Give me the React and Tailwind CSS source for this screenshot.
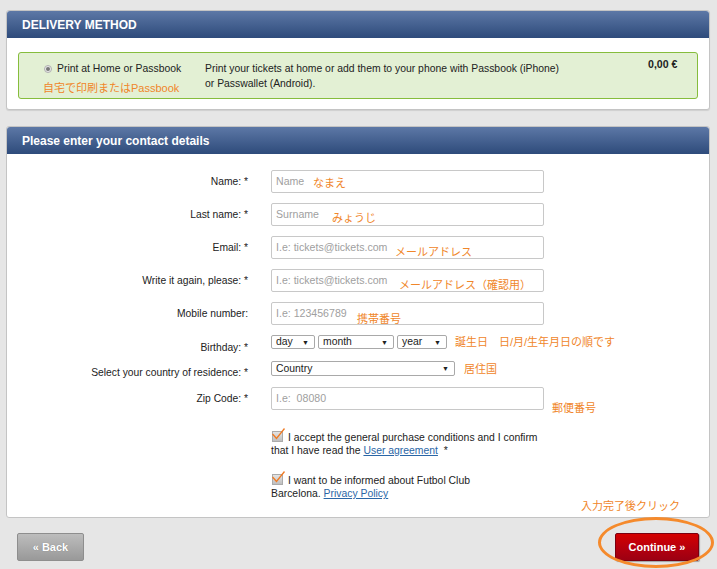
import React from 'react';

const orange = 'text-[#f0862a]';

function Radio() {
  return (
    <span className="inline-flex items-center justify-center w-[8px] h-[8px] rounded-full border border-[#b0b0b0] bg-[#e8e8e8] mr-[5px] shrink-0">
      <span className="w-[4px] h-[4px] rounded-full bg-[#777]" />
    </span>
  );
}

function CheckMark() {
  return (
    <svg width="15" height="14" viewBox="0 0 15 14" className="float-left mr-[2px] mt-[-3px]">
      <defs>
        <linearGradient id="cb" x1="0" y1="0" x2="0" y2="1">
          <stop offset="0" stopColor="#e6e6e6" />
          <stop offset="1" stopColor="#bdbdbd" />
        </linearGradient>
      </defs>
      <rect x="1.5" y="3.5" width="10" height="10" fill="url(#cb)" stroke="#ababab" />
      <path d="M1.5 6 L5.5 10.5 L13.5 0.5" fill="none" stroke="#f07a22" strokeWidth="1.3" />
    </svg>
  );
}

function TextField({ placeholder, note, noteX, noteY }) {
  return (
    <div className="relative w-[273px] h-[23px] border border-[#c8c8c8] rounded-[2px] bg-white flex items-center pl-[4px] text-[10.6px] text-[#a0a0a0] whitespace-pre">
      {placeholder}
      {note && (
        <span
          className={`absolute text-[11px] leading-[12px] whitespace-nowrap ${orange} ${noteX} ${noteY}`}
        >
          {note}
        </span>
      )}
    </div>
  );
}

function Select({ label, w, h = 'h-[14px]' }) {
  return (
    <div className={`${w} ${h} border border-[#a9a9a9] rounded-[2px] bg-white flex items-center justify-between pl-[4px] pr-[5px] text-[10.4px] text-[#222]`}>
      <span>{label}</span>
      <span className="text-[7px] leading-none">▼</span>
    </div>
  );
}

function Row({ label, children, className = 'items-center', labelClass = '' }) {
  return (
    <div className={`flex ${className}`}>
      <div className={`w-[241px] text-right text-[10.3px] leading-[13px] text-[#222] ${labelClass}`}>{label}</div>
      <div className="ml-[23px] flex items-center">{children}</div>
    </div>
  );
}

function PanelHeader({ title }) {
  return (
    <div className="h-[27px] bg-gradient-to-b from-[#5d78a6] to-[#2e4b7b] rounded-t-[3px] flex items-center px-[15px] text-white font-bold text-[12px]">
      {title}
    </div>
  );
}

export default function App() {
  return (
    <div className="w-[717px] h-[569px] overflow-hidden bg-[#e6e6e6] pt-[10px] pl-[6px] pr-[7px] font-[family-name:Liberation_Sans,Noto_Sans_CJK_JP,sans-serif] text-[#222]">
      {/* Delivery method */}
      <div className="bg-white border border-[#c4c4c4] rounded-[3px] shadow-[0_1px_1px_rgba(0,0,0,0.1)]">
        <PanelHeader title="DELIVERY METHOD" />
        <div className="px-[11px] pt-[14px] pb-[10px]">
          <div className="h-[47px] bg-[#e3f0d4] border border-[#86bd3c] rounded-[3px] flex pl-[25px] pt-[8px]">
            <div className="w-[161px] flex flex-col">
              <div className="flex items-center text-[10.4px] h-[15px]">
                <Radio />
                Print at Home or Passbook
              </div>
              <div className={`text-[11px] leading-[12px] mt-[6px] ml-[-1px] ${orange}`}>自宅で印刷またはPassbook</div>
            </div>
            <div className="w-[362px] text-[10.4px] leading-[15px]">
              Print your tickets at home or add them to your phone with Passbook (iPhone) or Passwallet (Android).
            </div>
            <div className="ml-[81px] text-[10.6px] font-bold leading-[12px] mt-[-3px]">0,00 €</div>
          </div>
        </div>
      </div>

      {/* Contact details */}
      <div className="mt-[16px] bg-white border border-[#c4c4c4] rounded-[3px] relative">
        <PanelHeader title="Please enter your contact details" />
        <div className="pt-[16px] pb-[17px] flex flex-col">
          <Row label="Name: *">
            <TextField placeholder="Name" note="なまえ" noteX="left-[41px]" noteY="top-[6px]" />
          </Row>
          <Row label="Last name: *" className="items-center mt-[10px]">
            <TextField placeholder="Surname" note="みょうじ" noteX="left-[60px]" noteY="top-[8px]" />
          </Row>
          <Row label="Email: *" className="items-center mt-[10px]">
            <TextField placeholder="I.e: tickets@tickets.com" note="メールアドレス" noteX="left-[123px]" noteY="top-[9px]" />
          </Row>
          <Row label="Write it again, please: *" className="items-center mt-[10px]">
            <TextField placeholder="I.e: tickets@tickets.com" note="メールアドレス（確認用）" noteX="left-[127px]" noteY="top-[9px]" />
          </Row>
          <Row label="Mobile number:" className="items-center mt-[10px]">
            <TextField placeholder="I.e: 123456789" note="携帯番号" noteX="left-[85px]" noteY="top-[10px]" />
          </Row>
          <Row label="Birthday: *" className="items-start h-[14px] mt-[10px]" labelClass="pt-[6px]">
            <div className="flex items-center gap-[3px] h-[14px]">
              <Select label="day" w="w-[44px]" />
              <Select label="month" w="w-[76px]" />
              <Select label="year" w="w-[50px]" />
              <span className={`ml-[5px] text-[11px] leading-[12px] ${orange}`}>誕生日　日/月/生年月日の順です</span>
            </div>
          </Row>
          <Row label="Select your country of residence: *" className="items-start h-[15px] mt-[12px]" labelClass="pt-[5px]">
            <div className="flex items-center">
              <Select label="Country" w="w-[184px]" h="h-[15px]" />
              <span className={`ml-[9px] text-[11px] leading-[12px] ${orange}`}>居住国</span>
            </div>
          </Row>
          <Row label="Zip Code: *" className="items-center mt-[11px]">
            <div className="flex items-end">
              <TextField placeholder="I.e:  08080" />
              <span className={`ml-[8px] mb-[-4px] text-[11px] leading-[12px] ${orange}`}>郵便番号</span>
            </div>
          </Row>

          <div className="ml-[264px] mt-[21px] w-[275px] text-[10.4px] leading-[13px]">
            <CheckMark />
            I accept the general purchase conditions and I confirm that I have read the{' '}
            <a className="text-[#2a66a6] underline underline-offset-1">User agreement</a>&nbsp; *
          </div>
          <div className="ml-[264px] mt-[17px] w-[220px] text-[10.4px] leading-[13px]">
            <CheckMark />
            I want to be informed about Futbol Club Barcelona.{' '}
            <a className="text-[#2a66a6] underline underline-offset-1">Privacy Policy</a>
          </div>
        </div>
        <span className={`absolute right-[29px] bottom-[5px] text-[11px] leading-[12px] ${orange}`}>入力完了後クリック</span>
      </div>

      {/* Buttons */}
      <div className="mt-[15px] px-[11px] flex justify-between">
        <button className="w-[67px] h-[28px] rounded-[2px] border border-[#8e8e8e] bg-gradient-to-b from-[#bdbdbd] to-[#999] text-white font-bold text-[11px] [text-shadow:0_0_1px_rgba(0,0,0,0.3)]">
          « Back
        </button>
        <div className="relative">
          <button className="w-[84px] h-[28px] rounded-[2px] border border-[#7a0010] bg-gradient-to-b from-[#d40000] to-[#9c0012] text-white font-bold text-[11px] shadow-[1px_1px_1px_rgba(0,0,0,0.3)]">
            Continue »
          </button>
          <div className="absolute left-[-17px] top-[-16px] w-[116px] h-[51px] rounded-[50%] border-[3px] border-[#f58a2c]" />
        </div>
      </div>
    </div>
  );
}
